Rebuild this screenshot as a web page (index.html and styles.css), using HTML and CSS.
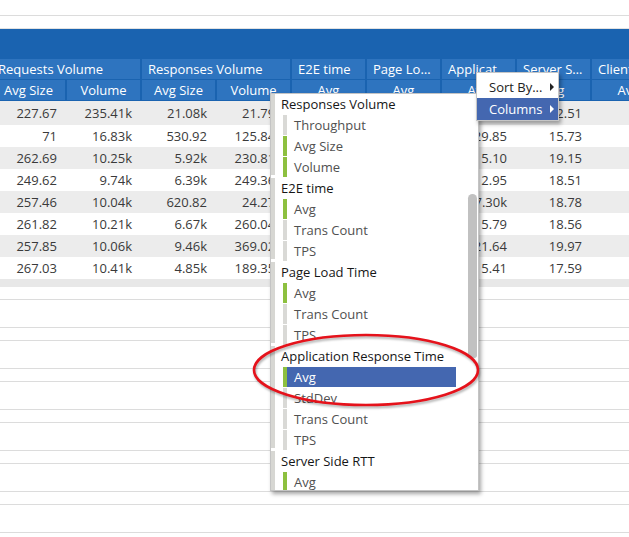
FILE: index.html
```html
<!DOCTYPE html>
<html>
<head>
<meta charset="utf-8">
<link rel="stylesheet" href="styles.css">
</head>
<body>
<div class="page">
  <div class="topbar"></div>
  <div class="subbar"></div>
  <div class="viewport">
    <div class="tbl">
      <div class="head">
        <div class="hr">
          <div class="hc span2">Requests Volume</div>
          <div class="hc span2">Responses Volume</div>
          <div class="hc">E2E time</div>
          <div class="hc">Page Load Time</div>
          <div class="hc">Application Response Time</div>
          <div class="hc">Server Side RTT</div>
          <div class="hc">Client Side RTT</div>
        </div>
        <div class="hr sub">
          <div class="hc">Avg Size</div>
          <div class="hc">Volume</div>
          <div class="hc">Avg Size</div>
          <div class="hc">Volume</div>
          <div class="hc">Avg</div>
          <div class="hc">Avg</div>
          <div class="hc">Avg</div>
          <div class="hc">Avg</div>
          <div class="hc">Avg</div>
        </div>
      </div>
      <div class="rows">
        <div class="row first alt"><span>227.67</span><span>235.41k</span><span>21.08k</span><span>21.79k</span><span>12.40</span><span>1.21k</span><span>18.72</span><span>12.51</span><span>3.45k</span></div>
        <div class="row"><span>71</span><span>16.83k</span><span>530.92</span><span>125.84k</span><span>14.22</span><span>1.09k</span><span>129.85</span><span>15.73</span><span>3.12k</span></div>
        <div class="row alt"><span>262.69</span><span>10.25k</span><span>5.92k</span><span>230.81k</span><span>11.63</span><span>980.2</span><span>15.10</span><span>19.15</span><span>3.08k</span></div>
        <div class="row"><span>249.62</span><span>9.74k</span><span>6.39k</span><span>249.36k</span><span>13.05</span><span>1.03k</span><span>12.95</span><span>18.51</span><span>3.27k</span></div>
        <div class="row alt"><span>257.46</span><span>10.04k</span><span>620.82</span><span>24.27k</span><span>12.88</span><span>1.15k</span><span>17.30k</span><span>18.78</span><span>3.33k</span></div>
        <div class="row"><span>261.82</span><span>10.21k</span><span>6.67k</span><span>260.04k</span><span>12.17</span><span>1.02k</span><span>15.79</span><span>18.56</span><span>3.19k</span></div>
        <div class="row alt"><span>257.85</span><span>10.06k</span><span>9.46k</span><span>369.02k</span><span>13.41</span><span>1.11k</span><span>121.64</span><span>19.97</span><span>3.41k</span></div>
        <div class="row"><span>267.03</span><span>10.41k</span><span>4.85k</span><span>189.35k</span><span>12.56</span><span>1.06k</span><span>15.41</span><span>17.59</span><span>3.22k</span></div>
      </div>
      <div class="hscroll"></div>
    </div>
  </div>
  <div class="lines">
    <div class="ln"></div><div class="ln"></div><div class="ln"></div>
    <div class="ln"></div><div class="ln"></div><div class="ln"></div>
  </div>

  <div class="colmenu">
    <div class="cm-list">
      <div class="grp">
        <div class="gh">Responses Volume</div>
        <div class="it">Throughput</div>
        <div class="it on">Avg Size</div>
        <div class="it on">Volume</div>
      </div>
      <div class="grp">
        <div class="gh">E2E time</div>
        <div class="it on">Avg</div>
        <div class="it">Trans Count</div>
        <div class="it">TPS</div>
      </div>
      <div class="grp">
        <div class="gh">Page Load Time</div>
        <div class="it on">Avg</div>
        <div class="it">Trans Count</div>
        <div class="it">TPS</div>
      </div>
      <div class="grp">
        <div class="gh">Application Response Time</div>
        <div class="it on sel">Avg</div>
        <div class="it">StdDev</div>
        <div class="it">Trans Count</div>
        <div class="it">TPS</div>
      </div>
      <div class="grp">
        <div class="gh">Server Side RTT</div>
        <div class="it on">Avg</div>
        <div class="it">Trans Count</div>
      </div>
    </div>
    <div class="cm-thumb"></div>
  </div>

  <div class="sortmenu">
    <div class="sm-it">Sort By...<i class="arr"></i></div>
    <div class="sm-it sel">Columns<i class="arr"></i></div>
  </div>

  <svg class="annot" width="236" height="82" viewBox="0 0 236 82">
    <ellipse cx="117" cy="40" rx="112" ry="35" fill="none" stroke="#e5121b" stroke-width="2.6"/>
  </svg>
</div>
</body>
</html>
```

FILE: styles.css
```css
html, body {
  margin: 0;
  padding: 0;
  background: #fff;
}
body {
  font-family: "Open Sans", "Noto Sans", sans-serif;
  font-size: 13px;
  width: 629px;
  height: 537px;
  overflow: hidden;
}
.page {
  position: relative;
  width: 629px;
  height: 537px;
  overflow: hidden;
}
.topbar {
  height: 15px;
  border-bottom: 1px solid #dcdcdc;
}
.subbar {
  height: 12px;
  border-bottom: 1px solid #e2e2e2;
}
.viewport {
  width: 629px;
  overflow: hidden;
}
.tbl {
  margin-left: -8px;
  width: 675px;
}
.head {
  background: #1a63b0;
  padding: 30px 0 1px;
  display: flex;
  flex-direction: column;
  gap: 1px;
}
.hr {
  display: grid;
  grid-template-columns: repeat(9, 73px);
  column-gap: 2px;
  height: 20px;
}
.hc {
  background: #2e74bf;
  color: #fff;
  line-height: 20px;
  padding: 0 6px;
  white-space: nowrap;
  overflow: hidden;
  text-overflow: ellipsis;
}
.hc.span2 {
  grid-column: span 2;
}
.hr.sub .hc {
  text-align: center;
  text-overflow: clip;
  padding: 0;
}
.row {
  display: grid;
  grid-template-columns: repeat(9, 73px);
  column-gap: 2px;
  height: 22px;
  align-items: center;
  background: #fff;
  color: #3a3a3a;
}
.row.first {
  height: 24px;
}
.row.alt {
  background: #ececec;
}
.row span {
  text-align: right;
  padding-right: 8px;
  white-space: nowrap;
}
.row span:nth-child(9) {
  padding-right: 3px;
}
.hscroll {
  height: 8px;
  background: #e8e8e8;
}
.lines {
  padding-top: 12px;
}
.ln {
  height: 27px;
  border-top: 1px solid #dcdcdc;
  border-bottom: 1px solid #dcdcdc;
  margin-bottom: 12px;
}

/* Columns submenu */
.colmenu {
  position: absolute;
  left: 270px;
  top: 93px;
  width: 207px;
  height: 396px;
  background: #fff;
  border: 1px solid #c4c4c4;
  box-shadow: 2px 3px 4px rgba(0, 0, 0, 0.35);
  overflow: hidden;
}
.cm-list {
  width: 185px;
}
.grp {
  position: relative;
  padding-left: 4px;
}
.grp::before {
  content: "";
  position: absolute;
  left: 0;
  top: 0;
  bottom: 2px;
  width: 4px;
  background: #d7d7d3;
}
.gh {
  height: 21px;
  line-height: 21px;
  padding-left: 6px;
  color: #161616;
  white-space: nowrap;
}
.it {
  height: 20px;
  line-height: 20px;
  margin: 0 0 1px 8px;
  border-left: 4px solid #d9d9d6;
  padding-left: 7px;
  color: #505050;
  white-space: nowrap;
}
.it.on {
  border-left-color: #8dc03f;
}
.it.sel {
  background: #4467b0;
  color: #fff;
}
.cm-thumb {
  position: absolute;
  left: 197px;
  top: 100px;
  width: 9px;
  height: 164px;
  background: #c1c1c1;
  border-radius: 5px 5px 3px 3px;
}

/* Sort / Columns context menu */
.sortmenu {
  position: absolute;
  left: 476px;
  top: 72px;
  width: 81px;
  padding-top: 3px;
  background: #fff;
  border: 1px solid #c6c6c6;
  box-shadow: 2px 3px 4px rgba(0, 0, 0, 0.35);
}
.sm-it {
  position: relative;
  height: 22px;
  line-height: 22px;
  padding-left: 12px;
  color: #222;
  white-space: nowrap;
}
.sm-it.sel {
  background: #4467b0;
  color: #fff;
}
.arr {
  position: absolute;
  right: 4px;
  top: 7px;
  width: 0;
  height: 0;
  border-left: 4px solid #222;
  border-top: 4px solid transparent;
  border-bottom: 4px solid transparent;
}
.sm-it.sel .arr {
  border-left-color: #fff;
}

/* red annotation */
.annot {
  position: absolute;
  left: 249px;
  top: 330px;
  filter: drop-shadow(1px 2px 1px rgba(0, 0, 0, 0.3));
}
```
